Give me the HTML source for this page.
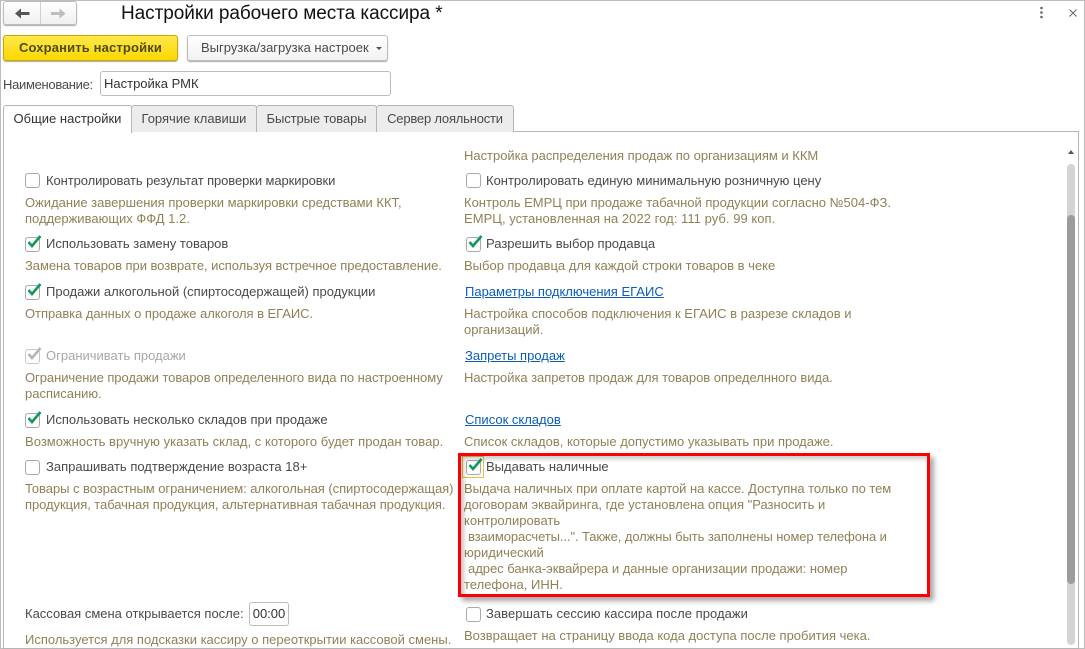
<!DOCTYPE html>
<html lang="ru"><head><meta charset="utf-8">
<style>
html,body{margin:0;padding:0}
body{width:1085px;height:649px;position:relative;overflow:hidden;background:#fff;font-family:"Liberation Sans",Arial,sans-serif;font-size:13px;color:#4a4a4a}
div,span,a{position:absolute;box-sizing:border-box;white-space:nowrap}
.t{line-height:16px;height:16px}
.l{color:#4a4a4a}
.d{color:#8f8157}
.a{color:#0b5cb8;text-decoration:underline}
.cb{width:15px;height:15px;border:1px solid #a9a9a9;border-radius:3px;background:#fff}
.cb svg{position:absolute;left:0;top:-4px;overflow:visible}
.tab{top:105px;height:27px;background:#ececec;border:1px solid #b4b4b4;border-bottom:none;border-radius:3px 3px 0 0;line-height:25px;text-align:center;color:#4a4a4a}
</style></head><body>
<div style="left:0;top:0;width:1085px;height:649px;border:1px solid #bdbdbd"></div>

<div style="left:3px;top:1px;width:74px;height:24px;border:1px solid #bcbcbc;border-radius:3px;background:linear-gradient(#fff,#f0f0f0);box-shadow:0 1px 1px #aaa"></div>
<div style="left:40px;top:2px;width:1px;height:22px;background:#d0d0d0"></div>
<svg style="position:absolute;left:15px;top:8px" width="15" height="11" viewBox="0 0 15 11"><path d="M0 5.500L6 0.500V4H14.500V7H6V10.500Z" fill="#555"/></svg>
<svg style="position:absolute;left:51px;top:8px" width="15" height="11" viewBox="0 0 15 11"><path d="M14.500 5.500L8.500 0.500V4H0V7H8.500V10.500Z" fill="#bdbdbd"/></svg>
<div style="left:121px;top:3px;font-size:19px;line-height:22px;color:#111;letter-spacing:-.06px">Настройки рабочего места кассира *</div>
<svg style="position:absolute;left:1039px;top:6px" width="5" height="13"><circle cx="2.500" cy="2" r="1.300" fill="#666"/><circle cx="2.500" cy="6.500" r="1.300" fill="#666"/><circle cx="2.500" cy="11" r="1.300" fill="#666"/></svg>
<svg style="position:absolute;left:1068px;top:8px" width="10" height="10"><path d="M1.500 1.500L8.500 8.500M8.500 1.500L1.500 8.500" stroke="#666" stroke-width="1" fill="none"/></svg>

<div style="left:3px;top:35px;width:175px;height:26px;border:1px solid #c9a800;border-radius:3px;background:linear-gradient(#ffe84a,#fcd800);box-shadow:0 1px 1px #aaa;text-align:center;line-height:24px;font-weight:bold;font-size:13px;color:#4f4a20;letter-spacing:.15px">Сохранить настройки</div>
<div style="left:187px;top:35px;width:201px;height:26px;border:1px solid #bdbdbd;border-radius:3px;background:linear-gradient(#fff,#f2f2f2);box-shadow:0 1px 1px #aaa;line-height:24px;color:#4a4a4a"><span style="left:13px;top:0">Выгрузка/загрузка настроек</span><span style="left:188px;top:11px;width:0;height:0;border:3px solid transparent;border-top:3px solid #555;border-bottom:none"></span></div>

<div class="t l" style="left:3px;top:77px;letter-spacing:-.3px">Наименование:</div>
<div style="left:100px;top:71px;width:291px;height:25px;border:1px solid #bdbdbd;border-radius:3px;line-height:23px;padding-left:3px;color:#333">Настройка РМК</div>

<div style="left:3px;top:131px;width:1076px;height:518px;border:1px solid #b4b4b4"></div>
<div class="tab" style="left:131px;width:126px">Горячие клавиши</div>
<div class="tab" style="left:256px;width:121px;letter-spacing:-.1px">Быстрые товары</div>
<div class="tab" style="left:376px;width:138px;letter-spacing:-.2px">Сервер лояльности</div>
<div class="tab" style="left:3px;width:129px;height:28px;background:#fff;color:#333">Общие настройки</div>

<div style="left:1067px;top:164px;width:8px;height:481px;border-radius:4px;background:#d4d4d4"></div>
<div style="left:1067px;top:215px;width:8px;height:369px;border-radius:4px;background:#9c9c9c"></div>
<div style="left:1068px;top:150px;width:0;height:0;border:3px solid transparent;border-top:none;border-bottom:4px solid #555"></div>

<div class="t d" style="left:464px;top:148px;letter-spacing:-.02px">Настройка распределения продаж по организациям и ККМ</div>

<!-- left -->
<div class="cb" style="left:25px;top:173px"></div>
<div class="t l" style="left:46px;top:173px;letter-spacing:-.09px">Контролировать результат проверки маркировки</div>
<div class="t d" style="left:25px;top:195px">Ожидание завершения проверки маркировки средствами ККТ,</div>
<div class="t d" style="left:25px;top:211px">поддерживающих ФФД 1.2.</div>

<div class="cb" style="left:25px;top:237px"><svg width="16" height="16"><path d="M2.500 8L6 12L14.500 2" stroke="#0f9a5a" stroke-width="2.600" fill="none"/></svg></div>
<div class="t l" style="left:46px;top:236px">Использовать замену товаров</div>
<div class="t d" style="left:25px;top:258px;letter-spacing:-.05px">Замена товаров при возврате, используя встречное предоставление.</div>

<div class="cb" style="left:25px;top:285px"><svg width="16" height="16"><path d="M2.500 8L6 12L14.500 2" stroke="#0f9a5a" stroke-width="2.600" fill="none"/></svg></div>
<div class="t l" style="left:46px;top:284px">Продажи алкогольной (спиртосодержащей) продукции</div>
<div class="t d" style="left:25px;top:306px;letter-spacing:-.05px">Отправка данных о продаже алкоголя в ЕГАИС.</div>

<div class="cb" style="left:25px;top:349px;border-color:#c8c8c8"><svg width="16" height="16"><path d="M2.500 8L6 12L14.500 2" stroke="#b5b5b5" stroke-width="2.600" fill="none"/></svg></div>
<div class="t" style="left:46px;top:348px;color:#a8a8a8">Ограничивать продажи</div>
<div class="t d" style="left:25px;top:370px;letter-spacing:-.06px">Ограничение продажи товаров определенного вида по настроенному</div>
<div class="t d" style="left:25px;top:386px">расписанию.</div>

<div class="cb" style="left:25px;top:413px"><svg width="16" height="16"><path d="M2.500 8L6 12L14.500 2" stroke="#0f9a5a" stroke-width="2.600" fill="none"/></svg></div>
<div class="t l" style="left:46px;top:412px">Использовать несколько складов при продаже</div>
<div class="t d" style="left:25px;top:434px;letter-spacing:.03px">Возможность вручную указать склад, с которого будет продан товар.</div>

<div class="cb" style="left:25px;top:460px"></div>
<div class="t l" style="left:46px;top:459px">Запрашивать подтверждение возраста 18+</div>
<div class="t d" style="left:25px;top:481px;letter-spacing:-.05px">Товары с возрастным ограничением: алкогольная (спиртосодержащая)</div>
<div class="t d" style="left:25px;top:497px;letter-spacing:-.06px">продукция, табачная продукция, альтернативная табачная продукция.</div>

<div class="t l" style="left:25px;top:606px">Кассовая смена открывается после:</div>
<div style="left:249px;top:602px;width:40px;height:24px;border:1px solid #bdbdbd;border-radius:3px;line-height:22px;text-align:center;color:#333">00:00</div>
<div class="t d" style="left:25px;top:632px">Используется для подсказки кассиру о переоткрытии кассовой смены.</div>

<!-- right -->
<div class="cb" style="left:466px;top:173px"></div>
<div class="t l" style="left:486px;top:173px">Контролировать единую минимальную розничную цену</div>
<div class="t d" style="left:464px;top:195px">Контроль ЕМРЦ при продаже табачной продукции согласно №504-ФЗ.</div>
<div class="t d" style="left:464px;top:211px;letter-spacing:.04px">ЕМРЦ, установленная на 2022 год: 111 руб. 99 коп.</div>

<div class="cb" style="left:466px;top:237px"><svg width="16" height="16"><path d="M2.500 8L6 12L14.500 2" stroke="#0f9a5a" stroke-width="2.600" fill="none"/></svg></div>
<div class="t l" style="left:486px;top:236px">Разрешить выбор продавца</div>
<div class="t d" style="left:464px;top:258px">Выбор продавца для каждой строки товаров в чеке</div>

<a class="t a" style="left:465px;top:284px">Параметры подключения ЕГАИС</a>
<div class="t d" style="left:464px;top:306px">Настройка способов подключения к ЕГАИС в разрезе складов и</div>
<div class="t d" style="left:464px;top:322px">организаций.</div>

<a class="t a" style="left:465px;top:348px">Запреты продаж</a>
<div class="t d" style="left:464px;top:370px;letter-spacing:-.05px">Настройка запретов продаж для товаров определнного вида.</div>

<a class="t a" style="left:465px;top:412px">Список складов</a>
<div class="t d" style="left:464px;top:434px">Список складов, которые допустимо указывать при продаже.</div>

<div style="left:462px;top:456px;width:22px;height:22px;border:1px solid #e8c04a"></div>
<div class="cb" style="left:466px;top:460px"><svg width="16" height="16"><path d="M2.500 8L6 12L14.500 2" stroke="#0f9a5a" stroke-width="2.600" fill="none"/></svg></div>
<div class="t l" style="left:486px;top:459px">Выдавать наличные</div>
<div class="t d" style="left:464px;top:481px;letter-spacing:-.045px">Выдача наличных при оплате картой на кассе. Доступна только по тем</div>
<div class="t d" style="left:464px;top:497px">договорам эквайринга, где установлена опция "Разносить и</div>
<div class="t d" style="left:464px;top:513px">контролировать</div>
<div class="t d" style="left:468px;top:529px;letter-spacing:-.09px">взаиморасчеты...". Также, должны быть заполнены номер телефона и</div>
<div class="t d" style="left:464px;top:545px">юридический</div>
<div class="t d" style="left:468px;top:561px;letter-spacing:-.03px">адрес банка-эквайрера и данные организации продажи: номер</div>
<div class="t d" style="left:464px;top:577px">телефона, ИНН.</div>
<div style="left:458px;top:453px;width:472px;height:144px;border:3px solid #ff0000;box-shadow:4px 4px 5px rgba(0,0,0,.35),inset 3px 3px 5px rgba(0,0,0,.22)"></div>

<div class="cb" style="left:466px;top:607px"></div>
<div class="t l" style="left:486px;top:606px;letter-spacing:.05px">Завершать сессию кассира после продажи</div>
<div class="t d" style="left:464px;top:628px">Возвращает на страницу ввода кода доступа после пробития чека.</div>
</body></html>
